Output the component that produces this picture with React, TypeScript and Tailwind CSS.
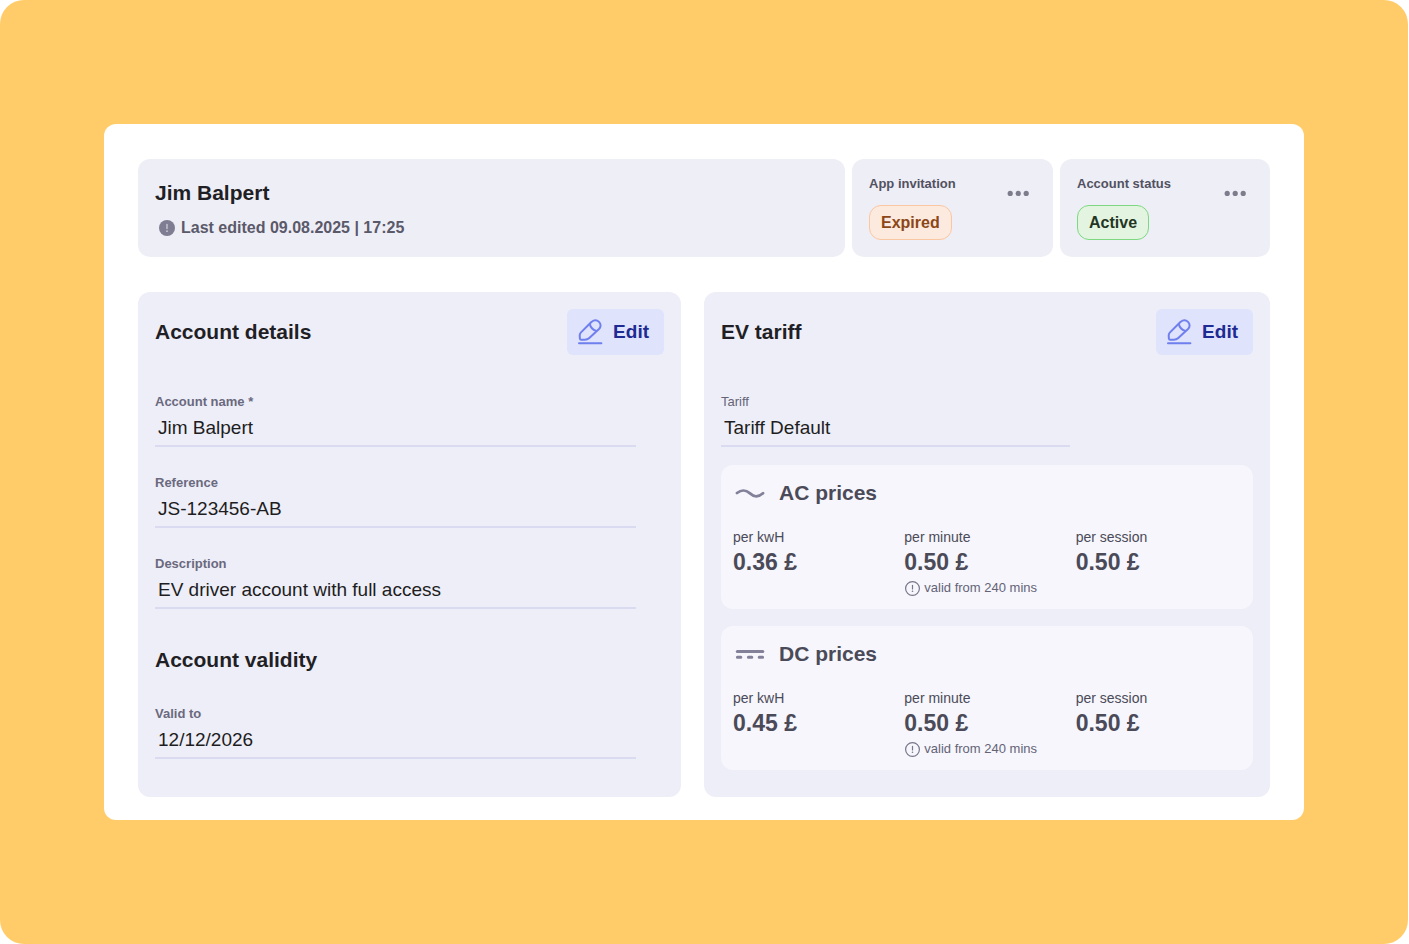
import type { ReactNode } from "react";

function PencilIcon() {
  return (
    <svg
      width="26"
      height="26"
      viewBox="0 0 26 26"
      fill="none"
      stroke="#6f7fee"
      strokeWidth="2"
      strokeLinecap="round"
      strokeLinejoin="round"
      aria-hidden="true"
    >
      <path d="M14.4 3 C17 0.9 20.1 1 22 2.9 C24.1 5 24.1 7.9 22 10 L12 19.3 C10.8 20.4 9.6 20.7 7.8 20.7 L4.2 20.8 Q3 20.8 2.9 19.6 L2.7 16.8 Q2.6 14.8 4 13.4 Z" />
      <path d="M12.9 5.2 Q13.8 10 19.3 11.9" />
      <path d="M2 24.2 H24.4" />
    </svg>
  );
}

function InfoFilledIcon() {
  return (
    <svg width="16" height="16" viewBox="0 0 16 16" aria-hidden="true">
      <circle cx="8" cy="8" r="8" fill="#7f7d92" />
      <path d="M8 4.5 V8.6" stroke="#c9c8d6" strokeWidth="1.4" strokeLinecap="round" />
      <circle cx="8" cy="11.2" r="0.9" fill="#c9c8d6" />
    </svg>
  );
}

function InfoOutlineIcon() {
  return (
    <svg width="16" height="16" viewBox="0 0 16 16" fill="none" aria-hidden="true">
      <circle cx="8.5" cy="8.5" r="6.9" stroke="#77768a" strokeWidth="1.2" />
      <path d="M8.5 5.4 V9" stroke="#77768a" strokeWidth="1.2" strokeLinecap="round" />
      <circle cx="8.5" cy="11.3" r="0.8" fill="#77768a" />
    </svg>
  );
}

function AcIcon() {
  return (
    <svg width="30" height="16" viewBox="0 0 30 16" fill="none" aria-hidden="true">
      <path
        d="M2 8 C7.5 3.8 11 5 15 8.4 C19 12 22.5 13 28 8.2"
        stroke="#83819a"
        strokeWidth="2.8"
        strokeLinecap="round"
      />
    </svg>
  );
}

function DcIcon() {
  return (
    <svg
      width="30"
      height="16"
      viewBox="0 0 30 16"
      fill="none"
      stroke="#83819a"
      strokeLinecap="round"
      aria-hidden="true"
    >
      <path d="M2.3 5.6 H27.8" strokeWidth="3" />
      <path d="M2.4 11.2 H5.8 M13.4 11.2 H16.8 M24.2 11.2 H27.6" strokeWidth="3" />
    </svg>
  );
}

function MenuButton({ label }: { label: string }) {
  return (
    <button type="button" aria-label={label} className="mt-[9px] h-5 cursor-pointer">
      <svg width="22" height="20" viewBox="0 0 22 20" fill="#7d7c8c" aria-hidden="true">
        <circle cx="3.2" cy="10.4" r="2.6" />
        <circle cx="11.2" cy="10.4" r="2.6" />
        <circle cx="19.2" cy="10.4" r="2.6" />
      </svg>
    </button>
  );
}

function StatusCard({ label, children }: { label: string; children: ReactNode }) {
  return (
    <section className="flex items-start justify-between rounded-xl bg-[#eeeef7] pt-[15px] pr-6 pb-[17px] pl-[17px]">
      <div>
        <h2 className="text-[13px] leading-5 font-bold text-[#52515f]">{label}</h2>
        {children}
      </div>
      <MenuButton label={`${label} options`} />
    </section>
  );
}

function EditButton({ label }: { label: string }) {
  return (
    <button
      type="button"
      aria-label={label}
      className="flex h-[46px] cursor-pointer items-center gap-2.5 rounded-md bg-[#dfe3fb] pr-[15px] pl-2.5 text-[19px] font-bold text-[#1d2b93]"
    >
      <PencilIcon />
      Edit
    </button>
  );
}

function Field({
  id,
  label,
  value,
  light = false,
}: {
  id: string;
  label: string;
  value: string;
  light?: boolean;
}) {
  return (
    <div className="flex flex-col">
      <label
        htmlFor={id}
        className={
          light
            ? "text-[13px] leading-5 text-[#656477]"
            : "text-[13px] leading-5 font-bold text-[#6a697e]"
        }
      >
        {label}
      </label>
      <input
        id={id}
        type="text"
        defaultValue={value}
        className="h-[35px] w-full border-b-2 border-[#dadaf1] bg-transparent px-[3px] pb-0.5 text-[19px] text-[#1d1d22] outline-none"
      />
    </div>
  );
}

function Price({ unit, value, note }: { unit: string; value: string; note?: string }) {
  return (
    <div>
      <dt className="text-sm leading-5 text-[#4b4a58]">{unit}</dt>
      <dd className="text-[23px] leading-[31px] font-bold text-[#4b4a58]">{value}</dd>
      {note && (
        <dd className="flex items-center gap-1 text-[13px] leading-5 whitespace-nowrap text-[#646376]">
          <InfoOutlineIcon />
          {note}
        </dd>
      )}
    </div>
  );
}

function PriceCard({ title, icon, kwh }: { title: string; icon: ReactNode; kwh: string }) {
  return (
    <section className="rounded-xl bg-[#f6f6fc] pt-3.5 pr-1.5 pb-[11px] pl-3">
      <div className="flex items-center gap-3.5 pl-0.5">
        {icon}
        <h3 className="text-[21px] leading-7 font-bold text-[#4b4a58]">{title}</h3>
      </div>
      <dl className="mt-5 grid grid-cols-3">
        <Price unit="per kwH" value={kwh} />
        <Price unit="per minute" value="0.50 £" note="valid from 240 mins" />
        <Price unit="per session" value="0.50 £" />
      </dl>
    </section>
  );
}

export default function App() {
  return (
    <div className="min-h-screen bg-white pr-px font-['Liberation_Sans',Arial,sans-serif]">
      <div className="flex min-h-screen items-center rounded-3xl bg-[#ffcc69] px-6 py-10 lg:px-[104px]">
        <main className="w-full rounded-xl bg-white px-[34px] pt-[35px] pb-[23px]">
          <header className="grid gap-[7px] lg:grid-cols-[707fr_201fr_210fr]">
            <div className="rounded-xl bg-[#eeeef7] px-[17px] pt-5 pb-[19px]">
              <h1 className="text-[21px] leading-7 font-bold text-[#1f1f25]">Jim Balpert</h1>
              <p className="mt-[11px] flex items-center gap-1.5 pl-1 text-base leading-5 font-bold text-[#5a5969]">
                <InfoFilledIcon />
                Last edited 09.08.2025 | 17:25
              </p>
            </div>
            <StatusCard label="App invitation">
              <span className="mt-[11px] inline-flex h-[35px] items-center rounded-xl border border-[#fbc6a2] bg-[#fdeadf] px-[11px] text-base font-bold text-[#8c4717]">
                Expired
              </span>
            </StatusCard>
            <StatusCard label="Account status">
              <span className="mt-[11px] inline-flex h-[35px] items-center rounded-xl border border-[#7dd881] bg-[#e3f5e1] px-[11px] text-base font-bold text-[#233524]">
                Active
              </span>
            </StatusCard>
          </header>

          <div className="mt-[35px] grid gap-[23px] lg:grid-cols-[543fr_566fr]">
            <section className="rounded-xl bg-[#eeeef8] px-[17px] pt-[17px] pb-[38px]">
              <div className="flex items-center justify-between">
                <h2 className="text-[21px] leading-7 font-bold text-[#1f1f25]">Account details</h2>
                <EditButton label="Edit account details" />
              </div>
              <div className="mt-[37px] mr-7 flex flex-col gap-[26px]">
                <Field id="account-name" label="Account name *" value="Jim Balpert" />
                <Field id="reference" label="Reference" value="JS-123456-AB" />
                <Field id="description" label="Description" value="EV driver account with full access" />
              </div>
              <h2 className="mt-[37px] text-[21px] leading-7 font-bold text-[#1f1f25]">
                Account validity
              </h2>
              <div className="mt-[30px] mr-7">
                <Field id="valid-to" label="Valid to" value="12/12/2026" />
              </div>
            </section>

            <section className="rounded-xl bg-[#eeeef8] px-[17px] pt-[17px] pb-[26px]">
              <div className="flex items-center justify-between">
                <h2 className="text-[21px] leading-7 font-bold text-[#1f1f25]">EV tariff</h2>
                <EditButton label="Edit EV tariff" />
              </div>
              <div className="mt-[37px] w-2/3 pr-1.5">
                <Field id="tariff" label="Tariff" value="Tariff Default" light />
              </div>
              <div className="mt-[18px] flex flex-col gap-[17px]">
                <PriceCard title="AC prices" icon={<AcIcon />} kwh="0.36 £" />
                <PriceCard title="DC prices" icon={<DcIcon />} kwh="0.45 £" />
              </div>
            </section>
          </div>
        </main>
      </div>
    </div>
  );
}
